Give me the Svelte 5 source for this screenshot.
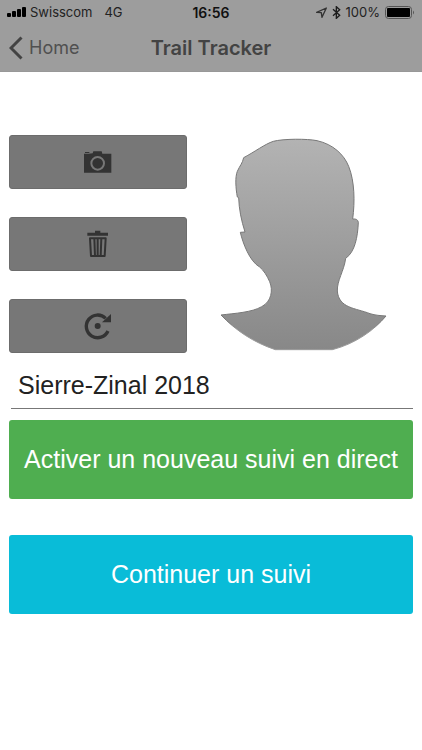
<script>
let nombre = "Sierre-Zinal 2018";

const barras = [4, 6, 8, 10];
</script>

<div class="page">

<header>

<div class="status">
<div class="left">
<svg class="signal" width="19" height="10" viewBox="0 0 19 10" aria-hidden="true">
{#each barras as alto, i}
<rect x={i * 5} y={10 - alto} width="4" height={alto} rx="1" />
{/each}
</svg>
<span>Swisscom</span>
<span class="network">4G</span>
</div>
<span class="time">16:56</span>
<div class="right">
<svg width="11" height="11" viewBox="0 0 33 33" aria-hidden="true">
<path d="M2 16 L31 3 L18 31 L16 17 Z" fill="none" stroke="#333" stroke-width="4" stroke-linejoin="round" />
</svg>
<svg class="bluetooth" width="9" height="13" viewBox="0 0 27 39" aria-hidden="true">
<path d="M3 10 L23 28 L13 37 V2 L23 11 L3 29" fill="none" stroke="#1c1c1c" stroke-width="4" />
</svg>
<span>100%</span>
<svg width="30" height="13" viewBox="0 0 30 13" aria-hidden="true">
<rect x="0.5" y="0.5" width="26" height="12" rx="3" fill="none" stroke="#555" />
<rect x="2" y="2" width="23" height="9" rx="1" />
<path d="M28 4.5 Q30 6.5 28 8.5 Z" fill="#555" />
</svg>
</div>
</div>

<nav>
<a href="#home">
<svg width="14" height="24" viewBox="0 0 14 24" aria-hidden="true">
<path d="M12.5 1.5 L2 12 L12.5 22.5" fill="none" stroke="#434343" stroke-width="3" />
</svg>
Home
</a>
<h1>Trail Tracker</h1>
</nav>

</header>

<main>

<section class="profile">
<div class="tools">
<button type="button" aria-label="Photo">
<svg width="30" height="30" viewBox="0 0 90 90" aria-hidden="true">
<path d="M3 20 H17 L29 19 L31 13 H56 L58 20 H85 V77 H3 Z M6 15 H19 V18 H6 Z" />
<circle cx="44" cy="49" r="19" fill="none" stroke="#777" stroke-width="6" />
</svg>
</button>
<button type="button" aria-label="Supprimer">
<svg width="30" height="30" viewBox="0 0 90 90" aria-hidden="true">
<path d="M36 5 H52 V11 H75 V20 H13 V11 H36 Z" />
<path d="M21 28 H68 L65 81 H24 Z M34 28 L36 81 M44 28 V81 M55 28 L53 81" fill="none" stroke="#333" stroke-width="6" stroke-linejoin="round" />
</svg>
</button>
<button type="button" aria-label="Tourner">
<svg width="30" height="30" viewBox="0 0 90 90" aria-hidden="true">
<path d="M68 22 A34 34 0 1 0 75 60" fill="none" stroke="#333" stroke-width="10" />
<path d="M84 9 V34 H57 Z" />
<circle cx="44" cy="45" r="9" />
</svg>
</button>
</div>

<div class="avatar">
<svg width="167" height="213" viewBox="30 37 501 639" role="img" aria-label="Avatar">
<defs>
<linearGradient id="shade" x1="0" y1="0" x2="0" y2="1">
<stop offset="0" stop-color="#b3b3b3" />
<stop offset="1" stop-color="#888" />
</linearGradient>
<linearGradient id="edge" x1="0" y1="0" x2="0" y2="1">
<stop offset="0" stop-color="#777" />
<stop offset="0.88" stop-color="#777" />
<stop offset="0.9" stop-color="#999" />
</linearGradient>
</defs>
<path d="M101 96 C135 78 165 55 190 47 C220 39 292 39 321 45 C370 56 402 87 416 122 C434 167 435 228 428 280 C438 279 444 282 445 290 C443 334 435 379 407 398 C402 436 381 464 382 496 C386 548 437 547 480 564 C496 569 512 570 528 571 C493 613 437 654 367 672 H196 C130 650 78 615 33 568 C75 563 126 560 155 543 C184 528 190 494 179 468 C171 450 161 434 149 424 C119 407 99 354 91 320 L105 319 C94 285 87 250 86 216 L82 214 C77 187 75 154 82 137 C89 121 98 112 101 96 Z" fill="url(#shade)" stroke="url(#edge)" stroke-width="3" stroke-linejoin="round" />
</svg>
</div>
</section>

<form on:submit|preventDefault>
<input type="text" aria-label="Nom du suivi" bind:value={nombre}>
<button type="submit" class="green">Activer un nouveau suivi en direct</button>
<button type="button" class="blue">Continuer un suivi</button>
</form>

</main>

</div>

<style>

:global(body){
margin:0;
background:white;
}

.page{
font-family:"Liberation Sans", Arial, sans-serif;
}

header{
background:#9d9d9d;
border-bottom:1px solid #989898;
font-family:Inter, sans-serif;
}

.status{
display:grid;
grid-template-columns:1fr auto 1fr;
align-items:center;
height:24px;
padding:0 7px;
font-size:13px;
color:#222;
}

.left,
.right{
display:flex;
align-items:center;
}

.signal{
margin-right:4px;
}

.network{
margin-left:12px;
}

.time{
color:#111;
font-size:14px;
font-weight:600;
}

.right{
justify-content:flex-end;
gap:5px;
}

nav{
display:grid;
grid-template-columns:1fr auto 1fr;
align-items:center;
height:47px;
padding:0 9px;
color:#434343;
}

nav a{
display:flex;
align-items:center;
gap:6px;
color:#505050;
font-size:18px;
text-decoration:none;
}

h1{
margin:0;
font-size:20px;
font-weight:600;
}

main{
padding:63px 9px 0;
}

.profile{
display:flex;
}

.tools{
display:flex;
flex-direction:column;
gap:28px;
width:44%;
}

button{
display:flex;
align-items:center;
justify-content:center;
width:100%;
padding:0;
border:none;
border-radius:3px;
font-family:inherit;
cursor:pointer;
}

.tools button{
height:54px;
background:#777;
border:1px solid #6c6c6c;
}

.tools svg{
fill:#333;
}

.avatar{
display:flex;
flex:1;
align-items:center;
justify-content:center;
padding-left:8px;
}

form{
display:flex;
flex-direction:column;
}

input{
height:46px;
margin:9px 0 11px 2px;
padding:0 7px;
border:none;
border-bottom:1px solid #777;
border-radius:0;
outline:none;
background:transparent;
color:#222;
font-family:inherit;
font-size:25px;
}

.green,
.blue{
height:79px;
color:white;
font-size:25px;
}

.green{
margin-bottom:36px;
background:#4fae50;
}

.blue{
background:#09bcd8;
}

</style>
